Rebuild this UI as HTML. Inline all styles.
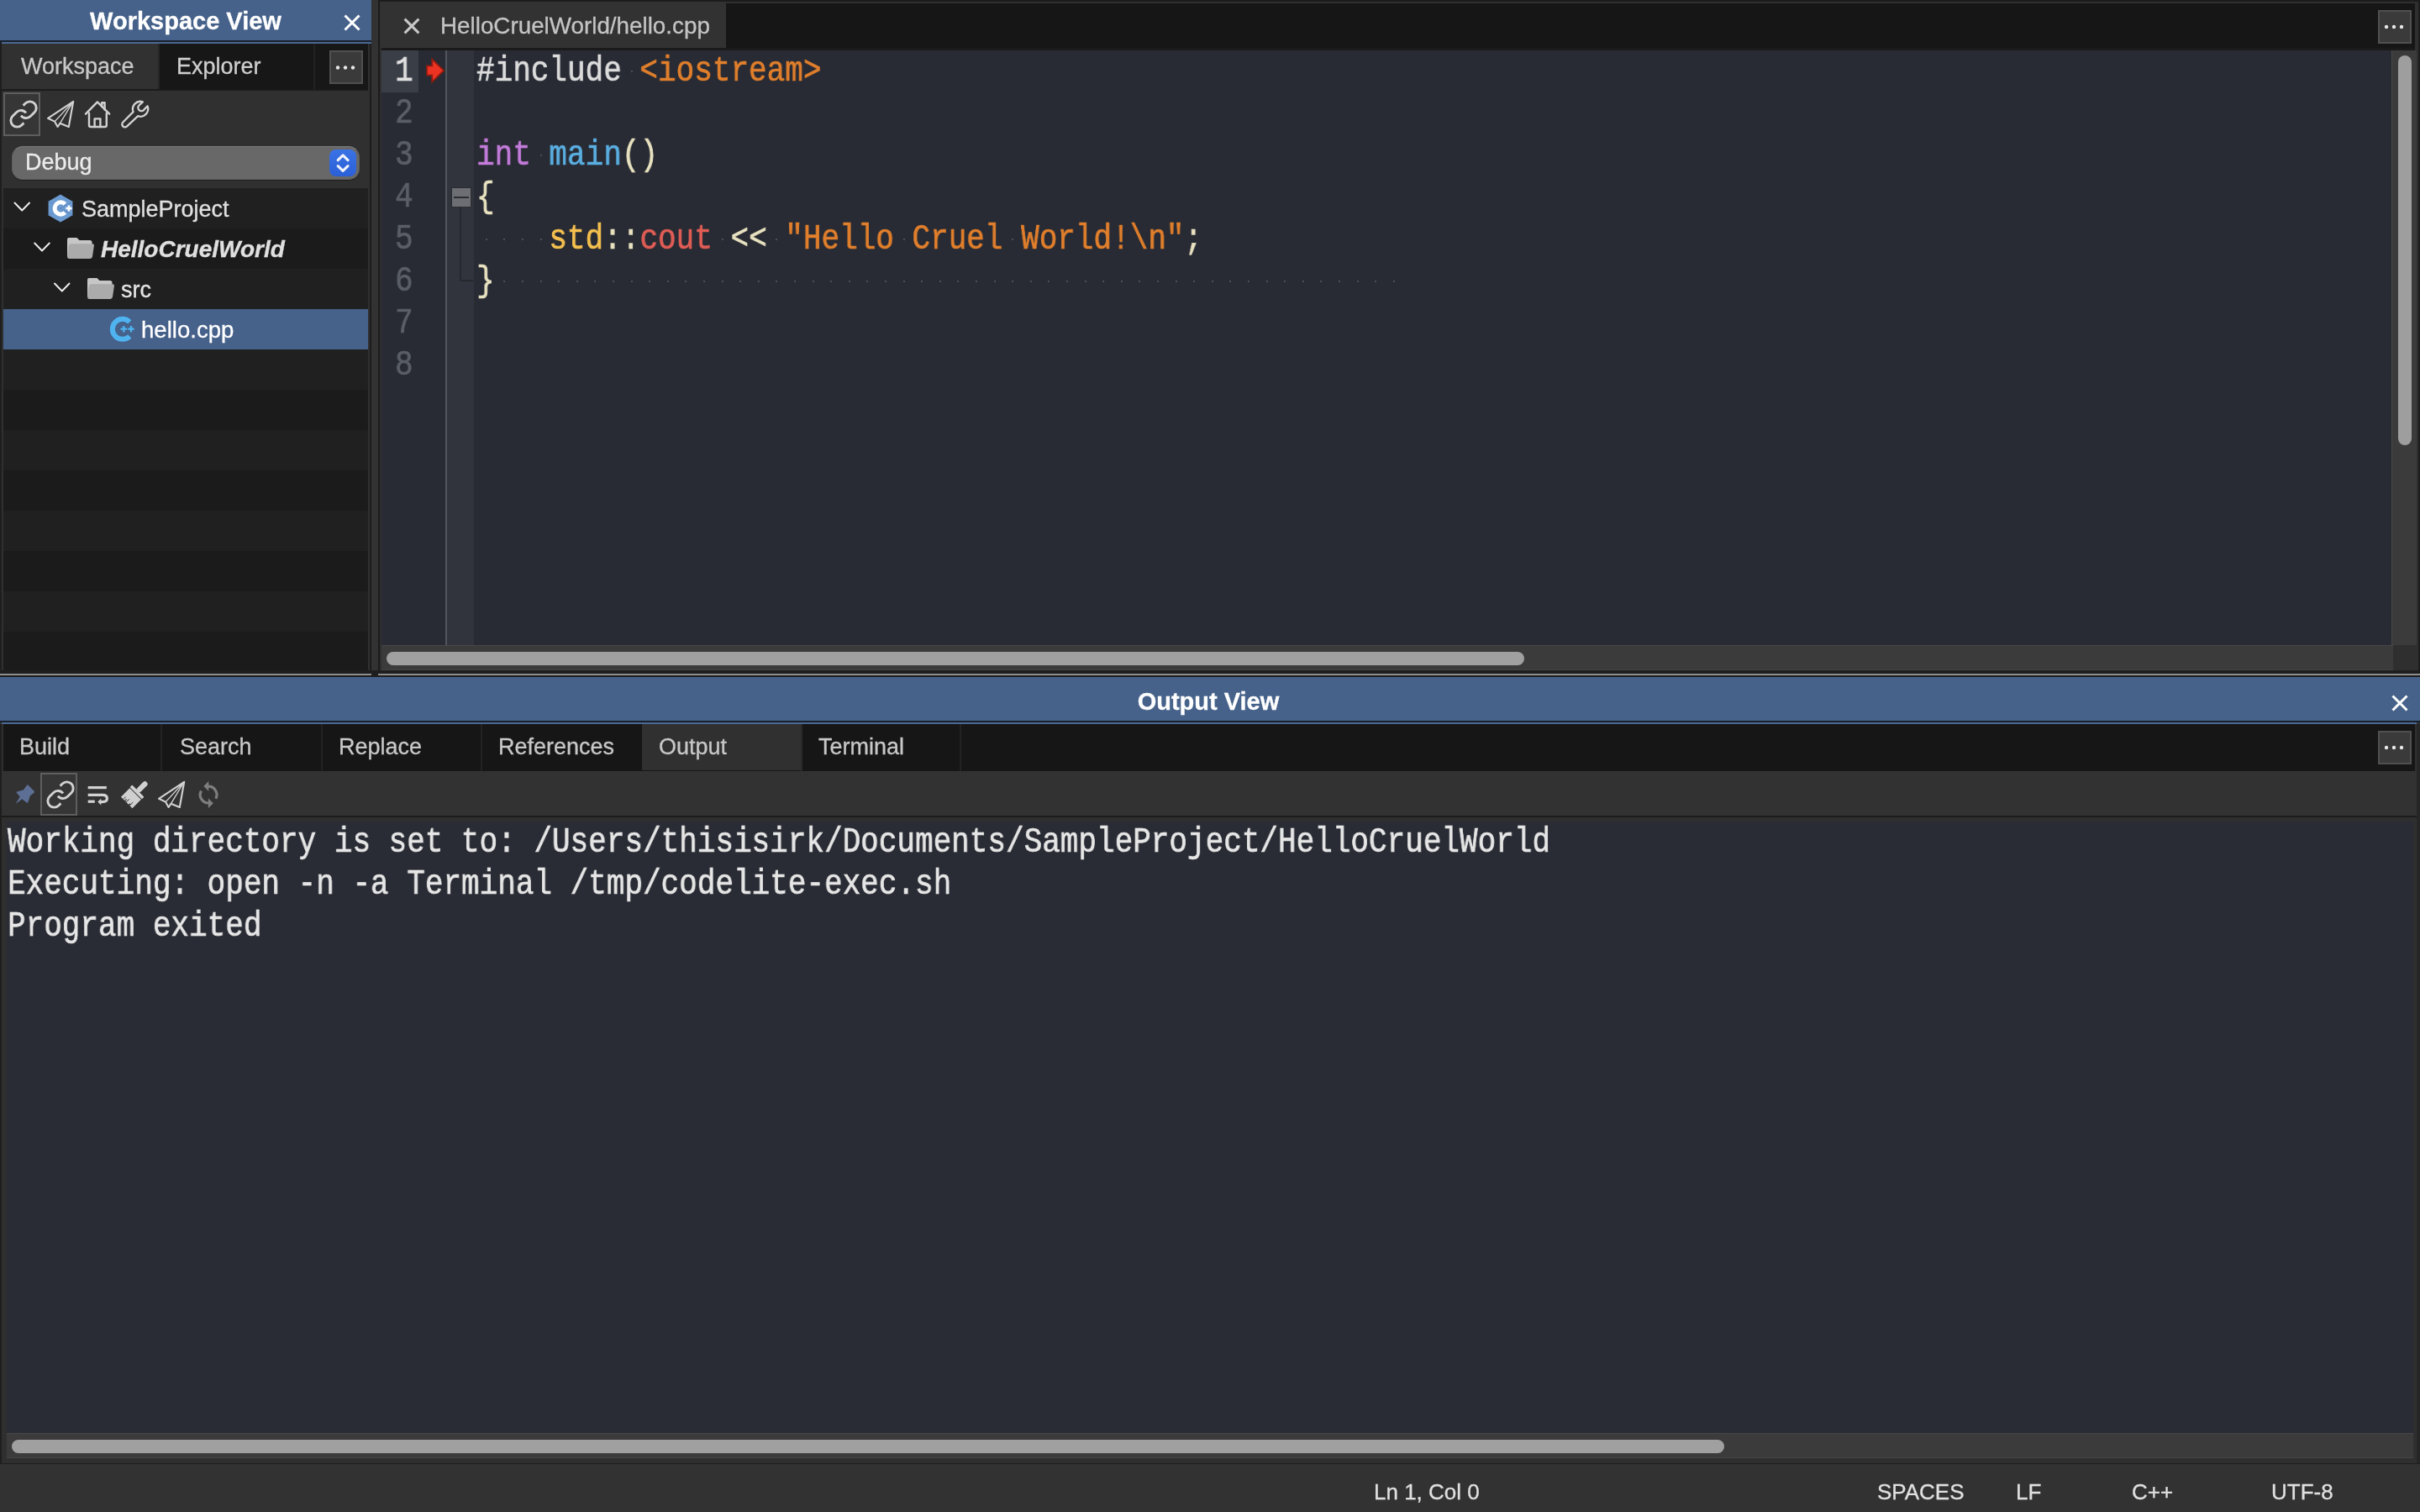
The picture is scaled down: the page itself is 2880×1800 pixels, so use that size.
<!DOCTYPE html>
<html><head><meta charset="utf-8">
<style>.t,.m{will-change:transform;}
html,body{margin:0;padding:0;}
body{width:2880px;height:1800px;position:relative;overflow:hidden;background:#323232;font-family:"Liberation Sans",sans-serif;}
.r{position:absolute;}
.t{position:absolute;white-space:pre;line-height:0;font-family:"Liberation Sans",sans-serif;font-size:27px;color:#c8c8c8;-webkit-text-stroke:0.3px currentColor;}
.b{font-weight:bold;font-size:29px;color:#ffffff;}
.m{position:absolute;white-space:pre;line-height:0;font-family:"Liberation Mono",monospace;font-size:42px;transform:scaleX(0.857);transform-origin:0 0;color:#dcdcdc;-webkit-text-stroke:0.7px currentColor;}
svg{position:absolute;overflow:visible;}
</style></head><body>

<!-- ===== Workspace View header ===== -->
<div class="r" style="left:0;top:0;width:442px;height:48px;background:#46628a"></div>
<div class="r" style="left:0;top:48px;width:442px;height:2px;background:#18202e"></div>
<div class="r" style="left:2px;top:50px;width:440px;height:2px;background:#4b6893"></div>
<div class="t b" style="left:0;top:25px;width:442px;text-align:center">Workspace View</div>

<!-- ===== Sidebar panel ===== -->
<div class="r" style="left:0;top:52px;width:442px;height:748px;background:#303030"></div>
<div class="r" style="left:0;top:50px;width:2px;height:750px;background:#1e1e1e"></div>
<!-- tabs row -->
<div class="r" style="left:2px;top:52px;width:436px;height:55px;background:#171717"></div>
<div class="r" style="left:2px;top:52px;width:186px;height:54px;background:#313131"></div>
<div class="r" style="left:188px;top:52px;width:2px;height:55px;background:#262626"></div>
<div class="r" style="left:373px;top:52px;width:2px;height:55px;background:#222"></div>
<div class="r" style="left:2px;top:106px;width:436px;height:2px;background:#1b1b1b"></div>
<div class="t" style="left:25px;top:79px">Workspace</div>
<div class="t" style="left:209.5px;top:79px;color:#cfcfcf">Explorer</div>
<div class="r" style="left:392px;top:60px;width:36px;height:36px;background:#3a3a3a;border:2px solid #505050"></div>

<!-- toolbar selected box -->
<div class="r" style="left:4px;top:110px;width:40px;height:48px;background:#363636;border:2px solid #5e5e5e"></div>

<!-- Debug dropdown -->
<div class="r" style="left:14px;top:174px;width:412px;height:38px;background:#686868;border-radius:13px;border:1px solid #5e5e5e;border-top-color:#7c7c7c;box-shadow:0 1px 1px rgba(0,0,0,.35)"></div>
<div class="t" style="left:30px;top:193px;color:#ececec">Debug</div>
<div class="r" style="left:392px;top:178px;width:32px;height:32px;background:linear-gradient(#3a73e6,#2b5fd6);border-radius:8px"></div>

<!-- tree -->
<div class="r" style="left:4px;top:224px;width:434px;height:574px;background:repeating-linear-gradient(#202020 0 48px,#1b1b1b 48px 96px)"></div>
<div class="r" style="left:4px;top:368px;width:434px;height:48px;background:#46618a"></div>
<div class="r" style="left:438px;top:108px;width:2px;height:692px;background:#303030"></div>
<div class="r" style="left:440px;top:52px;width:2px;height:748px;background:#1c1c1c"></div>
<div class="r" style="left:2px;top:798px;width:438px;height:2px;background:#2a2a2a"></div>
<div class="t" style="left:96.5px;top:249px;color:#e0e0e0">SampleProject</div>
<div class="t" style="left:120px;top:297px;color:#e0e0e0;font-weight:bold;font-style:italic;font-size:28px">HelloCruelWorld</div>
<div class="t" style="left:144px;top:345px;color:#e6e6e6">src</div>
<div class="t" style="left:168px;top:393px;color:#ffffff;font-size:27.6px">hello.cpp</div>

<!-- ===== vertical sash ===== -->
<div class="r" style="left:442px;top:0;width:8px;height:800px;background:#323232"></div>

<!-- ===== Editor panel ===== -->
<div class="r" style="left:450px;top:0;width:2430px;height:800px;background:#1c1c1c"></div>
<div class="r" style="left:452px;top:2px;width:2426px;height:796px;background:#2f2f2f"></div>
<div class="r" style="left:454px;top:4px;width:2420px;height:53px;background:#161616"></div>
<div class="r" style="left:453px;top:2px;width:411px;height:55px;background:#323232"></div>
<div class="t" style="left:524px;top:31px;color:#c4c4c4;font-size:27.8px">HelloCruelWorld/hello.cpp</div>
<div class="r" style="left:454px;top:57px;width:2420px;height:3px;background:#1a1a1a"></div>
<div class="r" style="left:2830px;top:12px;width:36px;height:36px;background:#3a3a3a;border:2px solid #505050"></div>

<!-- editor content -->
<div class="r" style="left:454px;top:60px;width:2392px;height:708px;background:#282b34"></div>
<div class="r" style="left:454px;top:60px;width:44px;height:50px;background:#3a3e47"></div>
<div class="r" style="left:530px;top:60px;width:2px;height:708px;background:#50545b"></div>
<div class="r" style="left:532px;top:60px;width:32px;height:708px;background:#31343c"></div>
<!-- v scrollbar -->
<div class="r" style="left:2846px;top:60px;width:30px;height:708px;background:#3b3b3b"></div>
<div class="r" style="left:2846px;top:60px;width:1px;height:708px;background:#484848"></div>
<div class="r" style="left:2854px;top:66px;width:16px;height:464px;background:#9e9e9e;border-radius:8px"></div>
<!-- h scrollbar -->
<div class="r" style="left:454px;top:768px;width:2394px;height:30px;background:#3b3b3b"></div>
<div class="r" style="left:454px;top:768px;width:2394px;height:1px;background:#484848"></div>
<div class="r" style="left:454px;top:797px;width:2394px;height:1px;background:#454545"></div>
<div class="r" style="left:460px;top:776px;width:1354px;height:16px;background:#a0a0a0;border-radius:8px"></div>
<div class="r" style="left:2848px;top:768px;width:28px;height:30px;background:#2f2f2f"></div>

<!-- ===== horizontal sash ===== -->
<div class="r" style="left:0;top:798px;width:2880px;height:8px;background:#1e1e1e"></div>
<div class="r" style="left:0;top:802px;width:442px;height:2px;background:#8e8e8e"></div>
<div class="r" style="left:450px;top:802px;width:2430px;height:2px;background:#8e8e8e"></div>

<!-- ===== Output View header ===== -->
<div class="r" style="left:0;top:806px;width:2880px;height:52px;background:#46628a"></div>
<div class="r" style="left:0;top:858px;width:2880px;height:2px;background:#18202e"></div>
<div class="r" style="left:2px;top:860px;width:2874px;height:2px;background:#4b6893"></div>
<div class="t b" style="left:0;top:835px;width:2876px;text-align:center">Output View</div>

<!-- ===== Output panel ===== -->
<div class="r" style="left:0;top:862px;width:2880px;height:881px;background:#2f2f2f"></div>
<div class="r" style="left:0;top:862px;width:2px;height:881px;background:#1e1e1e"></div>
<div class="r" style="left:2876px;top:862px;width:4px;height:881px;background:#262626"></div>
<div class="r" style="left:4px;top:862px;width:2870px;height:56px;background:#161616"></div>
<div class="r" style="left:764px;top:862px;width:189px;height:55px;background:#303030"></div>
<div class="r" style="left:191px;top:862px;width:2px;height:56px;background:#232323"></div>
<div class="r" style="left:382px;top:862px;width:2px;height:56px;background:#232323"></div>
<div class="r" style="left:572px;top:862px;width:2px;height:56px;background:#232323"></div>
<div class="r" style="left:953px;top:862px;width:2px;height:56px;background:#2a2a2a"></div>
<div class="r" style="left:1142px;top:862px;width:2px;height:56px;background:#232323"></div>
<div class="t" style="left:23px;top:889px">Build</div>
<div class="t" style="left:214px;top:889px">Search</div>
<div class="t" style="left:403px;top:889px">Replace</div>
<div class="t" style="left:593px;top:889px">References</div>
<div class="t" style="left:784px;top:889px">Output</div>
<div class="t" style="left:974px;top:889px">Terminal</div>
<div class="r" style="left:2830px;top:870px;width:36px;height:36px;background:#3a3a3a;border:2px solid #505050"></div>
<div class="r" style="left:2px;top:918px;width:2874px;height:53px;background:#323232"></div>
<div class="r" style="left:48px;top:920px;width:40px;height:47px;background:#363636;border:2px solid #5e5e5e"></div>
<div class="r" style="left:2px;top:971px;width:2874px;height:2px;background:#1c1c1c"></div>
<div class="r" style="left:8px;top:978px;width:2864px;height:728px;background:#292c34"></div>
<div class="r" style="left:8px;top:1706px;width:2864px;height:30px;background:#3b3b3b"></div>
<div class="r" style="left:8px;top:1706px;width:2864px;height:1px;background:#484848"></div>
<div class="r" style="left:8px;top:1735px;width:2864px;height:1px;background:#454545"></div>
<div class="r" style="left:14px;top:1714px;width:2038px;height:16px;background:#a0a0a0;border-radius:8px"></div>
<div class="r" style="left:0;top:1741.5px;width:2880px;height:2px;background:#1e1e1e"></div>

<!-- ===== Status bar ===== -->
<div class="r" style="left:0;top:1743px;width:2880px;height:57px;background:#323232"></div>
<div class="t" style="left:1635px;top:1776px;font-size:26px;color:#e0e0e0">Ln 1, Col 0</div>
<div class="t" style="left:2234px;top:1776px;font-size:26px;color:#e0e0e0">SPACES</div>
<div class="t" style="left:2399px;top:1776px;font-size:26px;color:#e0e0e0">LF</div>
<div class="t" style="left:2537px;top:1776px;font-size:26px;color:#e0e0e0">C++</div>
<div class="t" style="left:2703px;top:1776px;font-size:26px;color:#e0e0e0">UTF-8</div>

<!-- code -->
<div class="m" style="left:470px;top:84.8px;color:#e0e0e0">1</div>
<div class="m" style="left:566.5px;top:84.8px"><span style="color:#dcdcdc">#include</span><span style="color:#dcdcdc"> </span><span style="color:#e07f2c">&lt;iostream&gt;</span></div>
<div class="m" style="left:470px;top:134.8px;color:#5a5e66">2</div>
<div class="m" style="left:470px;top:184.8px;color:#5a5e66">3</div>
<div class="m" style="left:566.5px;top:184.8px"><span style="color:#c27bd9">int</span><span style="color:#dcdcdc"> </span><span style="color:#5aaee0">main</span><span style="color:#e8e2c0">()</span></div>
<div class="m" style="left:470px;top:234.8px;color:#5a5e66">4</div>
<div class="m" style="left:566.5px;top:234.8px"><span style="color:#e8e2c0">{</span></div>
<div class="m" style="left:470px;top:284.8px;color:#5a5e66">5</div>
<div class="m" style="left:566.5px;top:284.8px"><span style="color:#dcdcdc">    </span><span style="color:#f5c04f">std</span><span style="color:#e8e2c0">::</span><span style="color:#e05d55">cout</span><span style="color:#dcdcdc"> </span><span style="color:#e8e2c0">&lt;&lt;</span><span style="color:#dcdcdc"> </span><span style="color:#e07f2c">"Hello Cruel World!\n"</span><span style="color:#e8e2c0">;</span></div>
<div class="m" style="left:470px;top:334.8px;color:#5a5e66">6</div>
<div class="m" style="left:566.5px;top:334.8px"><span style="color:#e8e2c0">}</span></div>
<div class="m" style="left:470px;top:384.8px;color:#5a5e66">7</div>
<div class="m" style="left:470px;top:434.8px;color:#5a5e66">8</div>
<div class="r" style="left:750.6px;top:84px;width:2px;height:2px;background:#4a4e56"></div>
<div class="r" style="left:642.6px;top:184px;width:2px;height:2px;background:#4a4e56"></div>
<div class="r" style="left:577.8px;top:284px;width:2px;height:2px;background:#4a4e56"></div>
<div class="r" style="left:599.4px;top:284px;width:2px;height:2px;background:#4a4e56"></div>
<div class="r" style="left:621.0px;top:284px;width:2px;height:2px;background:#4a4e56"></div>
<div class="r" style="left:642.6px;top:284px;width:2px;height:2px;background:#4a4e56"></div>
<div class="r" style="left:858.6px;top:284px;width:2px;height:2px;background:#4a4e56"></div>
<div class="r" style="left:923.4px;top:284px;width:2px;height:2px;background:#4a4e56"></div>
<div class="r" style="left:1074.6px;top:284px;width:2px;height:2px;background:#4a4e56"></div>
<div class="r" style="left:1204.2px;top:284px;width:2px;height:2px;background:#4a4e56"></div>
<div class="r" style="left:599.4px;top:334px;width:2px;height:2px;background:#4a4e56"></div>
<div class="r" style="left:621.0px;top:334px;width:2px;height:2px;background:#4a4e56"></div>
<div class="r" style="left:642.6px;top:334px;width:2px;height:2px;background:#4a4e56"></div>
<div class="r" style="left:664.2px;top:334px;width:2px;height:2px;background:#4a4e56"></div>
<div class="r" style="left:685.8px;top:334px;width:2px;height:2px;background:#4a4e56"></div>
<div class="r" style="left:707.4px;top:334px;width:2px;height:2px;background:#4a4e56"></div>
<div class="r" style="left:729.0px;top:334px;width:2px;height:2px;background:#4a4e56"></div>
<div class="r" style="left:750.6px;top:334px;width:2px;height:2px;background:#4a4e56"></div>
<div class="r" style="left:772.2px;top:334px;width:2px;height:2px;background:#4a4e56"></div>
<div class="r" style="left:793.8px;top:334px;width:2px;height:2px;background:#4a4e56"></div>
<div class="r" style="left:815.4px;top:334px;width:2px;height:2px;background:#4a4e56"></div>
<div class="r" style="left:837.0px;top:334px;width:2px;height:2px;background:#4a4e56"></div>
<div class="r" style="left:858.6px;top:334px;width:2px;height:2px;background:#4a4e56"></div>
<div class="r" style="left:880.2px;top:334px;width:2px;height:2px;background:#4a4e56"></div>
<div class="r" style="left:901.8px;top:334px;width:2px;height:2px;background:#4a4e56"></div>
<div class="r" style="left:923.4px;top:334px;width:2px;height:2px;background:#4a4e56"></div>
<div class="r" style="left:945.0px;top:334px;width:2px;height:2px;background:#4a4e56"></div>
<div class="r" style="left:966.6px;top:334px;width:2px;height:2px;background:#4a4e56"></div>
<div class="r" style="left:988.2px;top:334px;width:2px;height:2px;background:#4a4e56"></div>
<div class="r" style="left:1009.8px;top:334px;width:2px;height:2px;background:#4a4e56"></div>
<div class="r" style="left:1031.4px;top:334px;width:2px;height:2px;background:#4a4e56"></div>
<div class="r" style="left:1053.0px;top:334px;width:2px;height:2px;background:#4a4e56"></div>
<div class="r" style="left:1074.6px;top:334px;width:2px;height:2px;background:#4a4e56"></div>
<div class="r" style="left:1096.2px;top:334px;width:2px;height:2px;background:#4a4e56"></div>
<div class="r" style="left:1117.8px;top:334px;width:2px;height:2px;background:#4a4e56"></div>
<div class="r" style="left:1139.4px;top:334px;width:2px;height:2px;background:#4a4e56"></div>
<div class="r" style="left:1161.0px;top:334px;width:2px;height:2px;background:#4a4e56"></div>
<div class="r" style="left:1182.6px;top:334px;width:2px;height:2px;background:#4a4e56"></div>
<div class="r" style="left:1204.2px;top:334px;width:2px;height:2px;background:#4a4e56"></div>
<div class="r" style="left:1225.8px;top:334px;width:2px;height:2px;background:#4a4e56"></div>
<div class="r" style="left:1247.4px;top:334px;width:2px;height:2px;background:#4a4e56"></div>
<div class="r" style="left:1269.0px;top:334px;width:2px;height:2px;background:#4a4e56"></div>
<div class="r" style="left:1290.6px;top:334px;width:2px;height:2px;background:#4a4e56"></div>
<div class="r" style="left:1312.2px;top:334px;width:2px;height:2px;background:#4a4e56"></div>
<div class="r" style="left:1333.8px;top:334px;width:2px;height:2px;background:#4a4e56"></div>
<div class="r" style="left:1355.4px;top:334px;width:2px;height:2px;background:#4a4e56"></div>
<div class="r" style="left:1377.0px;top:334px;width:2px;height:2px;background:#4a4e56"></div>
<div class="r" style="left:1398.6px;top:334px;width:2px;height:2px;background:#4a4e56"></div>
<div class="r" style="left:1420.2px;top:334px;width:2px;height:2px;background:#4a4e56"></div>
<div class="r" style="left:1441.8px;top:334px;width:2px;height:2px;background:#4a4e56"></div>
<div class="r" style="left:1463.4px;top:334px;width:2px;height:2px;background:#4a4e56"></div>
<div class="r" style="left:1485.0px;top:334px;width:2px;height:2px;background:#4a4e56"></div>
<div class="r" style="left:1506.6px;top:334px;width:2px;height:2px;background:#4a4e56"></div>
<div class="r" style="left:1528.2px;top:334px;width:2px;height:2px;background:#4a4e56"></div>
<div class="r" style="left:1549.8px;top:334px;width:2px;height:2px;background:#4a4e56"></div>
<div class="r" style="left:1571.4px;top:334px;width:2px;height:2px;background:#4a4e56"></div>
<div class="r" style="left:1593.0px;top:334px;width:2px;height:2px;background:#4a4e56"></div>
<div class="r" style="left:1614.6px;top:334px;width:2px;height:2px;background:#4a4e56"></div>
<div class="r" style="left:1636.2px;top:334px;width:2px;height:2px;background:#4a4e56"></div>
<div class="r" style="left:1657.8px;top:334px;width:2px;height:2px;background:#4a4e56"></div>
<div class="m" style="left:9px;top:1003.0px;color:#e6e6e6">Working directory is set to: /Users/thisisirk/Documents/SampleProject/HelloCruelWorld</div>
<div class="m" style="left:9px;top:1053.0px;color:#e6e6e6">Executing: open -n -a Terminal /tmp/codelite-exec.sh</div>
<div class="m" style="left:9px;top:1103.0px;color:#e6e6e6">Program exited</div>

<!-- close X icons -->
<svg style="left:408.5px;top:17px" width="20" height="20" viewBox="0 0 20 20"><path d="M1.5 1.5L18.5 18.5M18.5 1.5L1.5 18.5" stroke="#fff" stroke-width="3"/></svg>
<svg style="left:480px;top:21px" width="20" height="20" viewBox="0 0 20 20"><path d="M1.6 1.6L18.4 18.4M18.4 1.6L1.6 18.4" stroke="#c8c8c8" stroke-width="3"/></svg>
<svg style="left:2846px;top:827px" width="20" height="20" viewBox="0 0 20 20"><path d="M1.5 1.5L18.5 18.5M18.5 1.5L1.5 18.5" stroke="#fff" stroke-width="3"/></svg>
<!-- ... dots -->
<svg style="left:392px;top:60px" width="40" height="40"><circle cx="10" cy="20.5" r="2.2" fill="#e8e8e8"/><circle cx="19" cy="20.5" r="2.2" fill="#e8e8e8"/><circle cx="28" cy="20.5" r="2.2" fill="#e8e8e8"/></svg>
<svg style="left:2830px;top:12px" width="40" height="40"><circle cx="10" cy="20" r="2.2" fill="#e8e8e8"/><circle cx="19" cy="20" r="2.2" fill="#e8e8e8"/><circle cx="28" cy="20" r="2.2" fill="#e8e8e8"/></svg>
<svg style="left:2830px;top:870px" width="40" height="40"><circle cx="10" cy="20" r="2.2" fill="#e8e8e8"/><circle cx="19" cy="20" r="2.2" fill="#e8e8e8"/><circle cx="28" cy="20" r="2.2" fill="#e8e8e8"/></svg>

<!-- workspace toolbar icons -->
<svg style="left:12px;top:120px" width="32" height="32" viewBox="1.5 1.5 21 21"><g fill="none" stroke="#d2d2d2" stroke-width="1.9" stroke-linecap="butt" stroke-linejoin="round"><path d="M10 13a5 5 0 0 0 7.54.54l3-3a5 5 0 0 0-7.07-7.07l-1.72 1.71"/><path d="M14 11a5 5 0 0 0-7.54-.54l-3 3a5 5 0 0 0 7.07 7.07l1.71-1.71"/></g></svg>
<svg style="left:56px;top:120px" width="32" height="32" viewBox="0 0 32 32"><g fill="none" stroke="#d2d2d2" stroke-linejoin="round"><path d="M1 20.8L31.2 0.8L25.8 31L15.4 26.8L12.6 31L9 24.6Z" stroke-width="2.1"/><path d="M31 1L9.2 24.6M31 1L15.4 26.8" stroke-width="1.4"/></g></svg>
<svg style="left:101px;top:120px" width="32" height="32" viewBox="0 0 32 32"><g fill="none" stroke="#d2d2d2" stroke-width="2.4" stroke-linecap="round" stroke-linejoin="round"><path d="M1 15.6L14.9 1.4L29.2 15.6"/><path d="M20.2 7V2.3H23.6V10.4"/><path d="M5 14.8V29Q5 31 7 31H23.8Q25.8 31 25.8 29V14.8"/><path d="M11.6 31V21.4H18.4V31"/></g></svg>
<svg style="left:140px;top:116px" width="40" height="40" viewBox="140 116 40 40"><path d="M169.9 121.3A9 9 0 0 0 158.6 133.1L146.3 145.5A3.3 3.3 0 0 0 151.1 150.4L164.2 138.2A9 9 0 0 0 175.5 126.3L171.8 130.1A4 4 0 1 1 166 124.9Z" fill="none" stroke="#d2d2d2" stroke-width="2.3" stroke-linejoin="round"/></svg>

<!-- Debug dropdown chevrons -->
<svg style="left:392px;top:178px" width="32" height="32" viewBox="0 0 32 32"><g fill="none" stroke="#eef2fb" stroke-width="3.2" stroke-linecap="round" stroke-linejoin="round"><path d="M10.2 12.6L16.1 6.9L22 12.6"/><path d="M10.2 19.6L16.1 25.3L22 19.6"/></g></svg>

<!-- tree chevrons -->
<svg style="left:0;top:0;width:200px;height:360px" width="200" height="360"><g fill="none" stroke="#f0f0f0" stroke-width="1.9" stroke-linecap="round" stroke-linejoin="round">
<path d="M17.5 241.5L26.2 250.5L35 241.5"/><path d="M41.2 289.5L50 298.5L58.8 289.5"/><path d="M65 337.5L73.8 346.5L82.5 337.5"/></g></svg>

<!-- project hex icon -->
<svg style="left:57px;top:231px" width="30" height="34" viewBox="57 231 30 34">
<path d="M72 231.6L86.4 239.8V256.2L72 264.4L57.6 256.2V239.8Z" fill="#6c9bd2"/>
<path d="M57.6 256.2L86.4 239.8M57.6 239.8L86.4 256.2" stroke="#5a86bb" stroke-width="0.8"/>
<path d="M77.4 242.9A7.2 7.2 0 1 0 77.4 253.1" fill="none" stroke="#fff" stroke-width="5"/>
<path d="M78.3 248H85.6M81.95 244.4V251.6" stroke="#fff" stroke-width="2.6"/>
</svg>

<!-- folders -->
<svg style="left:79px;top:282px" width="34" height="28" viewBox="79 282 34 28">
<path d="M82 283H91.5L94.5 286H107Q109.5 286 109.5 288.5V305H80V285Q80 283 82 283Z" fill="#c6c6c6"/>
<path d="M84.3 290.2H109.8Q112.3 290.2 111.9 292.6L110 305.6Q109.6 308 107.2 308H82.4Q79.9 308 80.1 305.6L81.8 292.6Q82.1 290.2 84.3 290.2Z" fill="#ababab"/>
</svg>
<svg style="left:103px;top:330px" width="34" height="28" viewBox="79 282 34 28">
<path d="M82 283H91.5L94.5 286H107Q109.5 286 109.5 288.5V305H80V285Q80 283 82 283Z" fill="#c6c6c6"/>
<path d="M84.3 290.2H109.8Q112.3 290.2 111.9 292.6L110 305.6Q109.6 308 107.2 308H82.4Q79.9 308 80.1 305.6L81.8 292.6Q82.1 290.2 84.3 290.2Z" fill="#ababab"/>
</svg>

<!-- hello.cpp icon -->
<svg style="left:128px;top:374px" width="34" height="36" viewBox="128 374 34 36">
<path d="M154.3 383.3A12 12 0 1 0 154.3 400.3" fill="none" stroke="#4fb3f0" stroke-width="6"/>
<path d="M143.5 391.7H151.1M147.3 387.9V395.5M152.2 391.7H159.8M156 387.9V395.5" stroke="#4fb3f0" stroke-width="2.3"/>
</svg>

<!-- red breakpoint/marker arrow -->
<svg style="left:505px;top:67px" width="26" height="34" viewBox="505 67 26 34">
<path d="M508 78.3H514.2V70.3L528.2 83.9L514.2 97.6V89.7H508Z" fill="#ea3322" stroke="#8e1b10" stroke-width="1.8" stroke-linejoin="miter"/>
</svg>

<!-- fold marker -->
<div class="r" style="left:537px;top:223px;width:22px;height:22px;background:#6c6e73;border:1.5px solid #2a2d33"></div>
<div class="r" style="left:540px;top:234px;width:18px;height:2px;background:#2a2d33"></div>
<div class="r" style="left:547px;top:246px;width:2px;height:89px;background:#25282e"></div>
<div class="r" style="left:547px;top:333px;width:16px;height:2px;background:#25282e"></div>

<!-- output toolbar icons -->
<svg style="left:12px;top:926px" width="32" height="38" viewBox="12 926 32 38"><path d="M33.4 934.5L40.8 942.1Q41.6 943.1 40.2 944L35.9 947.2L33.7 954.3Q33.1 956.6 31.3 955.2L26.3 951.3L18.5 957L23.8 948.6L19.9 944.1Q18.9 942.7 20.6 942.3L27.8 940.5L31.9 935.1Q32.6 933.8 33.4 934.5Z" fill="#5d6f94"/></svg>
<svg style="left:56px;top:930px" width="32" height="32" viewBox="1.5 1.5 21 21"><g fill="none" stroke="#d2d2d2" stroke-width="1.9" stroke-linecap="butt" stroke-linejoin="round"><path d="M10 13a5 5 0 0 0 7.54.54l3-3a5 5 0 0 0-7.07-7.07l-1.72 1.71"/><path d="M14 11a5 5 0 0 0-7.54-.54l-3 3a5 5 0 0 0 7.07 7.07l1.71-1.71"/></g></svg>
<svg style="left:104px;top:934px" width="26" height="26" viewBox="104 934 26 26"><g fill="none" stroke="#d2d2d2" stroke-width="3.2"><path d="M104.7 937.6H126.8"/><path d="M104.7 946.3H122Q127.4 946.3 127.4 950.5Q127.4 954.6 122 954.6H118.5"/><path d="M104.7 954.2H112.8"/></g><path d="M116.3 954.6L120.3 950.8V958.4Z" fill="#d2d2d2"/></svg>
<svg style="left:143.1px;top:922.65px" width="40" height="40" viewBox="-20 -20 40 40"><g transform="rotate(45)" fill="#d0d0d0">
<rect x="-3.2" y="-16.6" width="6.1" height="15.6" rx="3"/>
<rect x="-10.1" y="-2" width="20.2" height="3.8" rx="0.8"/>
<path d="M-9.4 2.8H9.7V17.5H4.8V15.2H3.4V17.5H-2.2V14.8H-3.4V17.5H-9.4Z"/>
<path d="M-5.6 17.6V13.4M-0.6 17.6V12.4M5.2 17.6V11.8" stroke="#2e2e2e" stroke-width="0.9"/>
</g></svg>
<svg style="left:188px;top:930px" width="32" height="32" viewBox="0 0 32 32"><g fill="none" stroke="#d2d2d2" stroke-linejoin="round"><path d="M1 20.8L31.2 0.8L25.8 31L15.4 26.8L12.6 31L9 24.6Z" stroke-width="2.1"/><path d="M31 1L9.2 24.6M31 1L15.4 26.8" stroke-width="1.4"/></g></svg>
<svg style="left:228px;top:926px" width="40" height="40" viewBox="228 926 40 40"><g fill="none" stroke="#7e7e7e" stroke-width="3.2"><path d="M247 936.3A9.8 9.8 0 0 1 256.75 950.7"/><path d="M249.2 955.9A9.8 9.8 0 0 1 239.45 941.5"/></g><path d="M242.3 935.9L248.3 930V941.7Z" fill="#7e7e7e"/><path d="M253.9 956.3L247.9 950.6V962Z" fill="#7e7e7e"/></svg>


</body></html>
